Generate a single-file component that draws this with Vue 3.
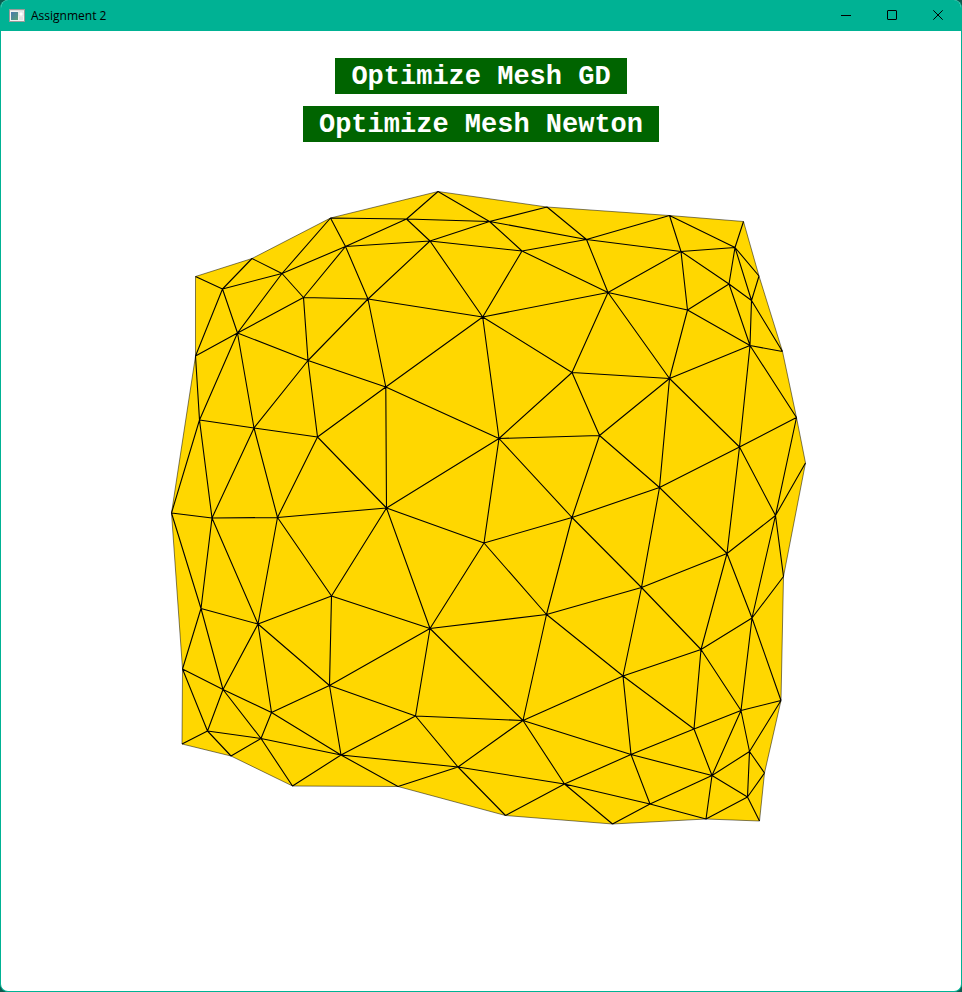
<script setup>
import { computed } from 'vue'

// Outline vertices, clockwise from the top-left corner.
const rim = [
  [195.5, 276.5], [252, 258.5], [330.5, 218], [438, 191.5], [547, 207],
  [669.5, 215.5], [743.5, 221.5], [759, 276], [782.5, 351.5], [796.5, 417.5],
  [805.5, 463], [783.5, 576.5], [781, 700.5], [764.5, 773], [759.5, 821],
  [706, 819], [612.5, 824], [505.5, 815.5], [398, 786.5], [292.5, 786],
  [231, 756], [182, 744], [182.5, 669], [171.5, 513], [195.5, 356],
]

const inner = {
  a: [222.5, 289], b: [282, 273.5], c: [303.5, 297.5], d: [345.5, 246.5],
  e: [368, 299], f: [237.5, 333], g: [308, 360.5], h: [385.8, 387],
  i: [406.5, 219], j: [430, 241], k: [489.5, 221.5], l: [522, 251],
  m: [586.5, 239.5], n: [608, 292.5], o: [482.7, 317], p: [572, 372.5],
  q: [681, 251.5], r: [735, 247.5], s: [729, 284], t: [751.5, 300.5],
  u: [687.5, 310], v: [750, 345.5], w: [669.5, 378.5], x: [199.5, 420],
  y: [254, 428], z: [317.5, 437], A: [499, 438.5], B: [599.5, 435.5],
  C: [739.5, 447], D: [659.5, 487.5], E: [386.5, 508], F: [212, 518],
  G: [277.5, 517.5], H: [484, 543], I: [572, 517.5], J: [775.5, 515.5],
  K: [727, 553.5], L: [641.5, 587.5], M: [331.5, 596], N: [201, 608.5],
  O: [258, 624], P: [430, 628.5], Q: [546.5, 614.5], R: [752, 618],
  S: [701, 649.5], T: [623, 676], U: [329.5, 685.5], V: [223, 689.5],
  W: [271.5, 712.5], X: [207.5, 731], Y: [261, 738.5], Z: [341, 755],
  aa: [415.5, 716], bb: [523, 720.5], cc: [458, 767], dd: [564.5, 784],
  ee: [631, 754.5], ff: [694, 729], gg: [741, 710.5], hh: [749.5, 751.5],
  ii: [712, 775.5], jj: [747.5, 797], kk: [650, 804],
}

// Each entry is "from: to to to"; numbers refer to outline vertices.
const links = [
  'a: 0 1 b f 24', 'b: 1 2 d c f', 'c: d f e g', 'd: 2 e i j',
  'e: g j o h', 'f: 24 g x y', 'g: h y z', 'h: o A E z',
  'i: 2 3 k j', 'j: k l o', 'k: 3 4 m l', 'l: m n o',
  'm: 4 5 q n', 'n: o p w u q', 'o: p A', 'p: A B w',
  'q: 5 r s u', 'r: 5 6 7 t s', 's: t u v', 't: 7 8 v',
  'u: v w', 'v: 8 9 C w', 'w: B D C', 'x: 24 23 y F',
  'y: z F G', 'z: G E', 'A: B E H I', 'B: I D',
  'C: D K J 9', 'D: I L K', 'E: G M P H', 'F: 23 G N O',
  'G: O M', 'H: I P Q', 'I: Q L', 'J: 9 10 11 K R',
  'K: L S R', 'L: Q T S', 'M: O U P', 'N: 23 22 V O',
  'O: U W V', 'P: Q U aa bb', 'Q: bb T', 'R: 11 12 S gg',
  'S: T ff gg', 'T: bb ee ff', 'U: W Z aa', 'V: 22 X Y W',
  'W: Y Z', 'X: 22 21 20 Y', 'Y: 20 19 Z', 'Z: 19 18 cc aa',
  'aa: cc bb', 'bb: cc dd ee', 'cc: 18 17 dd', 'dd: 17 16 ee kk',
  'ee: kk ff ii', 'ff: gg ii', 'gg: 12 hh ii', 'hh: 12 13 ii jj',
  'ii: jj kk 15', 'jj: 13 14 15', 'kk: 16 15',
]

const vertex = (key) => inner[key] ?? rim[Number(key)]

const outline = computed(() => rim.map((p) => p.join(',')).join(' '))

const edges = computed(() =>
  links
    .flatMap((row) => {
      const [from, targets] = row.split(': ')
      return targets.split(' ').map((to) => `M${vertex(from)}L${vertex(to)}`)
    })
    .join('')
)
</script>

<template>
  <div class="window">
    <header class="titlebar">
      <svg class="app-icon" viewBox="0 0 16 14" aria-hidden="true">
        <defs>
          <linearGradient id="pane" x1="0" y1="0" x2="1" y2="1">
            <stop offset="0" stop-color="#4a78ae" />
            <stop offset="1" stop-color="#58a077" />
          </linearGradient>
        </defs>
        <rect x="0.5" y="0.5" width="15" height="12" fill="#f2f2f2" stroke="#9a9a9a" />
        <rect x="1" y="1" width="14" height="1" fill="#dcdcdc" />
        <rect x="2" y="3" width="7" height="8" fill="url(#pane)" />
        <rect x="10" y="3" width="4" height="4" fill="#fff" stroke="#c4c8ca" stroke-width="0.5" />
        <rect x="10" y="8" width="4" height="3" fill="#dfe2e3" />
      </svg>
      <h1 class="title">Assignment 2</h1>
      <div class="controls">
        <button type="button" class="control" aria-label="Minimize">
          <svg viewBox="0 0 10 10" aria-hidden="true"><path d="M0 5.5H10" /></svg>
        </button>
        <button type="button" class="control" aria-label="Maximize">
          <svg viewBox="0 0 10 10" aria-hidden="true"><rect x="0.5" y="0.5" width="9" height="9" rx="0.5" /></svg>
        </button>
        <button type="button" class="control" aria-label="Close">
          <svg viewBox="0 0 10 10" aria-hidden="true"><path d="M0.3 0.3L9.7 9.7M9.7 0.3L0.3 9.7" /></svg>
        </button>
      </div>
    </header>
    <main class="client">
      <div class="actions">
        <button type="button" class="action">Optimize Mesh GD</button>
        <button type="button" class="action">Optimize Mesh Newton</button>
      </div>
      <svg class="mesh" viewBox="151 182 660 660" role="img" aria-label="Triangle mesh">
        <polygon class="face" :points="outline" />
        <path class="edges" :d="edges" />
      </svg>
    </main>
  </div>
</template>

<style>
body {
  background: #0b5c4f;
}
</style>

<style scoped>
.window {
  box-sizing: border-box;
  display: flex;
  flex-direction: column;
  min-height: 100vh;
  border: 1px solid #00b294;
  border-top: 0;
  border-radius: 8px;
  background: #fff;
  overflow: hidden;
}

.titlebar {
  display: flex;
  align-items: center;
  height: 31px;
  padding-left: 8px;
  background: #00b294;
  color: #000;
}

.app-icon {
  width: 16px;
  height: 14px;
}

.title {
  margin: 0 0 0 6px;
  font: 400 12px/16px "Segoe UI", "Open Sans", "Noto Sans", sans-serif;
}

.controls {
  display: flex;
  height: 100%;
  margin-left: auto;
}

.control {
  display: flex;
  align-items: center;
  justify-content: center;
  width: 46px;
  height: 30px;
  padding: 0;
  border: 0;
  background: transparent;
}

.control svg {
  width: 10px;
  height: 10px;
  fill: none;
  stroke: #000;
}

.client {
  display: flex;
  flex: 1;
  flex-direction: column;
  align-items: center;
  gap: 40px;
  padding-top: 27px;
}

.actions {
  display: flex;
  flex-direction: column;
  align-items: center;
  gap: 12px;
}

.action {
  height: 36px;
  padding: 2px 16px 0;
  border: 0;
  background: #006400;
  color: #fff;
  font: 700 27px/34px "Courier New", "Liberation Mono", monospace;
}

.mesh {
  width: 68.75%;
  aspect-ratio: 1;
}

.face {
  fill: #ffd700;
  stroke: #000;
  stroke-width: 0.5;
}

.edges {
  fill: none;
  stroke: #000;
  stroke-width: 1.1;
}
</style>
